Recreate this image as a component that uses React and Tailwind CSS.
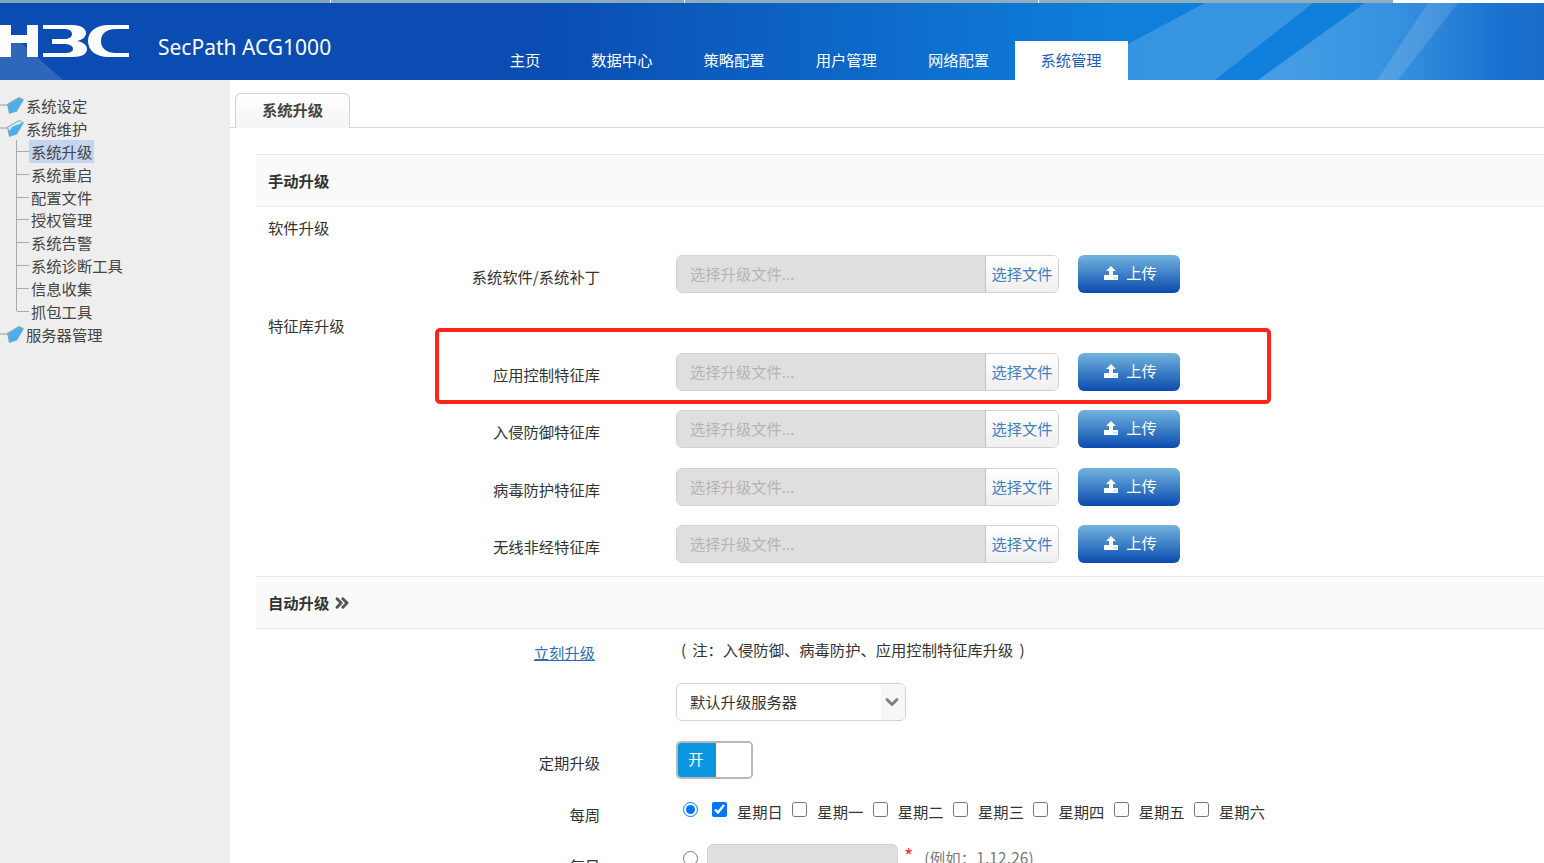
import { ChevronDown, ChevronsRight } from "lucide-react";

const FONT = "font-['Noto_Sans_CJK_SC','Noto_Sans',sans-serif]";

const treeTop = ["系统设定", "系统维护"];
const treeChildren = ["系统升级", "系统重启", "配置文件", "授权管理", "系统告警", "系统诊断工具", "信息收集", "抓包工具"];
const navItems = ["主页", "数据中心", "策略配置", "用户管理", "网络配置"];
const days = ["星期日", "星期一", "星期二", "星期三", "星期四", "星期五", "星期六"];

/* H3C logo */
const Logo = () => (
  <svg width="130" height="32" viewBox="0 0 130 32" fill="white" className="shrink-0">
    <path d="M0 0H11V10H27V0H38V32H27V18H11V32H0Z" />
    <path d="M43 0H72C82 0 86 4 86 8C86 12 82 15 77 16C83 17 87 20 87 24C87 29 82 32 72 32H43V28H64C70 28 73 26.500 73 24C73 20.500 69 19 64 19H52V14H64C69 14 72 12 72 9C72 6 69 4 64 4H43Z" />
    <path d="M129 0V4H116C105 4 101 10 101 16C101 22 105 28 116 28H129V32H109C95 32 88 25 88 16C88 7 95 0 109 0Z" />
  </svg>
);

/* header light streaks */
const HeaderArt = () => (
  <svg className="absolute inset-0 h-full w-full" viewBox="0 0 1544 77" preserveAspectRatio="none">
    <defs>
      <linearGradient id="fade" x1="1258" x2="1500" y1="0" y2="0" gradientUnits="userSpaceOnUse">
        <stop offset="0" stopColor="#ffffff" stopOpacity="0.24" />
        <stop offset="0.6" stopColor="#ffffff" stopOpacity="0.15" />
        <stop offset="1" stopColor="#ffffff" stopOpacity="0" />
      </linearGradient>
    </defs>
    <path d="M0 39 L20 39 L63 77 L0 77 Z" fill="#ffffff" opacity="0.15" />
    <path d="M1128 41 L1205 0 L1313 0 L1215 77 L1128 77 Z" fill="#ffffff" opacity="0.17" />
    <path d="M1258 77 L1365 0 L1500 0 L1500 77 Z" fill="url(#fade)" />
    <path d="M1377 77 L1428 0 L1458 0 L1398 77 Z" fill="#ffffff" opacity="0.13" />
  </svg>
);

const Folder = ({ open }) => (
  <svg width="24" height="18" viewBox="0 0 24 18" className="shrink-0">
    <path d="M0 9h8" stroke="#999" strokeWidth="1" fill="none" />
    <path d="M7 8 L19 1 L24 3.500 L17 15.500 L9 18 Z" fill="#7fa6c0" />
    <path d="M8.500 9.500 L19.500 3 L22.500 4.500 L16 14.500 L10 16.500 Z" fill="#42b3ef" />
    {open && <path d="M8 8.500 L19 2 L22.500 3.800 L12 8 L9.500 12 Z" fill="#dcebf3" />}
  </svg>
);

const TreeTop = ({ label, open }) => (
  <div className="flex h-[22.9px] items-center">
    <Folder open={open} />
    <span className="ml-[2px] text-[#444]">{label}</span>
  </div>
);

const Sidebar = () => (
  <aside className="w-[230px] shrink-0 bg-[#eeeeee] pt-[14px] text-[15.3px]">
    <TreeTop label={treeTop[0]} />
    <TreeTop label={treeTop[1]} open />
    <div className="relative ml-[16px] h-[171px] border-l-[1.5px] border-[#aaa]">
      {treeChildren.map((item, i) => (
        <div key={item} className="flex h-[22.9px] items-center">
          <span className="h-px w-[12px] shrink-0 bg-[#aaa]" />
          <span className={i === 0 ? "bg-[#c3d5ef] px-[2px] text-[#444]" : "px-[2px] text-[#444]"}>{item}</span>
        </div>
      ))}
    </div>
    <div className="mt-[12px]">
      <TreeTop label="服务器管理" />
    </div>
  </aside>
);

const UploadIcon = () => (
  <svg width="14" height="14" viewBox="0 0 14 14" fill="white">
    <path d="M7 0 L12 5 H9 V9 H14 V14 H0 V9 H5 V5 H2 Z" />
    <path d="M9.500 11.500h1v1h-1zM11.500 11.500h1v1h-1z" fill="#5f86c8" />
  </svg>
);

const UploadRow = ({ label, className }) => (
  <div className={`flex h-[38px] items-center ${className}`}>
    <div className="w-[344px] pt-[4px] text-right text-[#333]">{label}</div>
    <div className="ml-[76px] flex h-[38px] w-[383px] overflow-hidden rounded-[6px] border border-[#d2d2d2]">
      <div className="flex-1 bg-[#dfdfdf] pl-[13px] leading-[34px] text-[#b4b4b4]">选择升级文件...</div>
      <div className="flex w-[73px] items-center justify-center border-l border-[#c4c4c4] bg-gradient-to-b from-white to-[#efefef] pb-[2px] text-[#3f7fc0]">选择文件</div>
    </div>
    <button className="ml-[19px] flex h-[38px] w-[102px] items-center justify-center rounded-[6px] bg-gradient-to-b from-[#72b4dd] to-[#0a4aae] pl-[3px] text-white">
      <span className="pb-[2px]">
        <UploadIcon />
      </span>
      <span className="ml-[8px] pb-[4px]">上传</span>
    </button>
  </div>
);

const SectionHeader = ({ children, className }) => (
  <div className={`flex h-[53px] items-center border-y border-[#e8e8e8] bg-[#fafafa] pl-[12px] font-bold text-[#333] ${className}`}>
    {children}
  </div>
);

const App = () => (
  <div className={`relative flex h-[863px] w-[1544px] flex-col overflow-hidden bg-white ${FONT}`}>
    {/* top strip */}
    <div className="flex h-[3px] shrink-0">
      <div className="w-[330px] bg-[#7ea6bd]" />
      <div className="ml-px w-[353px] bg-[#8aacbf]" />
      <div className="ml-px w-[353px] bg-[#8eadbd]" />
      <div className="ml-px w-[354px] bg-[#93aebb]" />
    </div>

    {/* header */}
    <header className="relative flex h-[77px] shrink-0 bg-[linear-gradient(90deg,#0a4cb1_35%,#0f7fdb_72%,#1080dc_88%,#1c6dcb_100%)]">
      <HeaderArt />
      <div className="relative mt-[22px]">
        <Logo />
      </div>
      <div className="relative ml-[28px] mt-[30px] font-['Noto_Sans',sans-serif] text-[21px] leading-[28px] text-white">SecPath ACG1000</div>
      <nav className="relative ml-[153px] mt-[38px] flex h-[39px] text-[15.3px] text-white">
        {navItems.map((item) => (
          <div key={item} className="flex h-full items-center px-[25.500px] pb-[2px]">{item}</div>
        ))}
        <div className="flex h-full w-[113px] items-center justify-center bg-white pb-[2px] text-[#1d5fc0]">系统管理</div>
      </nav>
    </header>

    <div className="flex min-h-0 flex-1 text-[15.3px]">
      <Sidebar />
      <main className="min-w-0 flex-1">
        {/* tab */}
        <div className="flex h-[48px] items-end border-b border-[#d8d8d8] pl-[5px]">
          <div className="mb-[-1px] flex h-[35px] w-[115px] items-center justify-center rounded-t-[6px] border border-b-0 border-[#d0d0d0] bg-gradient-to-b from-white to-[#f4f4f4] pb-[4px] font-bold text-[#444]">
            系统升级
          </div>
        </div>

        <div className="pl-[26px]">
          <SectionHeader className="mt-[26px]">手动升级</SectionHeader>
          <div className="mt-[9px] pl-[12px] leading-[22px] text-[#333]">软件升级</div>
          <UploadRow label="系统软件/系统补丁" className="mt-[17px]" />
          <div className="mt-[21px] pl-[12px] leading-[22px] text-[#333]">特征库升级</div>
          <UploadRow label="应用控制特征库" className="mt-[17px]" />
          <UploadRow label="入侵防御特征库" className="mt-[19px]" />
          <UploadRow label="病毒防护特征库" className="mt-[20px]" />
          <UploadRow label="无线非经特征库" className="mt-[19px]" />

          <SectionHeader className="mt-[13px]">
            自动升级
            <ChevronsRight size={20} strokeWidth={3.500} color="#555" className="ml-[3px]" />
          </SectionHeader>

          <div className="mt-[11px] flex h-[24px] items-center">
            <div className="w-[339px] text-right text-[#2a6fb5] underline">立刻升级</div>
            <div className="ml-[86px] pb-[6px] text-[#333]">
              (<span className="ml-[6px]">注：入侵防御、病毒防护、应用控制特征库升级</span><span className="ml-[6px]">)</span>
            </div>
          </div>

          <div className="ml-[420px] mt-[19px] flex h-[38px] w-[230px] overflow-hidden rounded-[6px] border border-[#d2d2d2]">
            <div className="flex-1 pl-[13px] leading-[34px] text-[#333]">默认升级服务器</div>
            <div className="flex w-[24px] items-center justify-center bg-[#f7f7f7] pr-[2px]">
              <ChevronDown size={20} strokeWidth={3.500} color="#808080" />
            </div>
          </div>

          <div className="mt-[20px] flex h-[38px] items-center">
            <div className="w-[344px] pt-[4px] text-right text-[#333]">定期升级</div>
            <div className="ml-[76px] flex h-[38px] w-[77px] overflow-hidden rounded-[5px] border-2 border-[#b9b9b9]">
              <div className="flex w-[38px] items-center justify-center bg-[#0c96df] pb-[4px] pr-[2px] text-white">开</div>
              <div className="flex-1 rounded-l-[5px] bg-white" />
            </div>
          </div>

          <div className="mt-[19px] flex h-[22px] items-center">
            <div className="w-[344px] pt-[10px] text-right text-[#333]">每周</div>
            <input type="radio" name="cycle" defaultChecked className="ml-[83px] h-[15px] w-[15px] accent-[#0075ff]" />
            <div className="ml-[14px] flex items-center">
              {days.map((day, i) => (
                <label key={day} className="mr-[9.450px] flex items-center text-[#333]">
                  <input type="checkbox" defaultChecked={i === 0} className="h-[15px] w-[15px] accent-[#0075ff]" />
                  <span className="ml-[10px] pt-[4px] leading-[20px]">{day}</span>
                </label>
              ))}
            </div>
          </div>

          <div className="mt-[24px] flex h-[38px]">
            <div className="w-[344px] pt-[10px] text-right text-[#333]">每日</div>
            <input type="radio" name="cycle" className="ml-[83px] mt-[7px] h-[15px] w-[15px] accent-[#0075ff]" />
            <div className="ml-[9px] h-[38px] w-[191px] rounded-[6px] border border-[#d2d2d2] bg-[#dfdfdf]" />
            <span className="ml-[6px] text-[20px] font-normal leading-[24px] text-[#f33]">*</span>
            <span className="ml-[11px] pt-[2px] tracking-[0.2px] text-[#777]">(例如：1,12,26)</span>
          </div>
        </div>
      </main>
    </div>

    {/* red highlight box over the screenshot */}
    <div className="absolute left-[435px] top-[328px] h-[76px] w-[836px] rounded-[5px] border-[4px] border-[#ff2418]" />
  </div>
);

export default App;
